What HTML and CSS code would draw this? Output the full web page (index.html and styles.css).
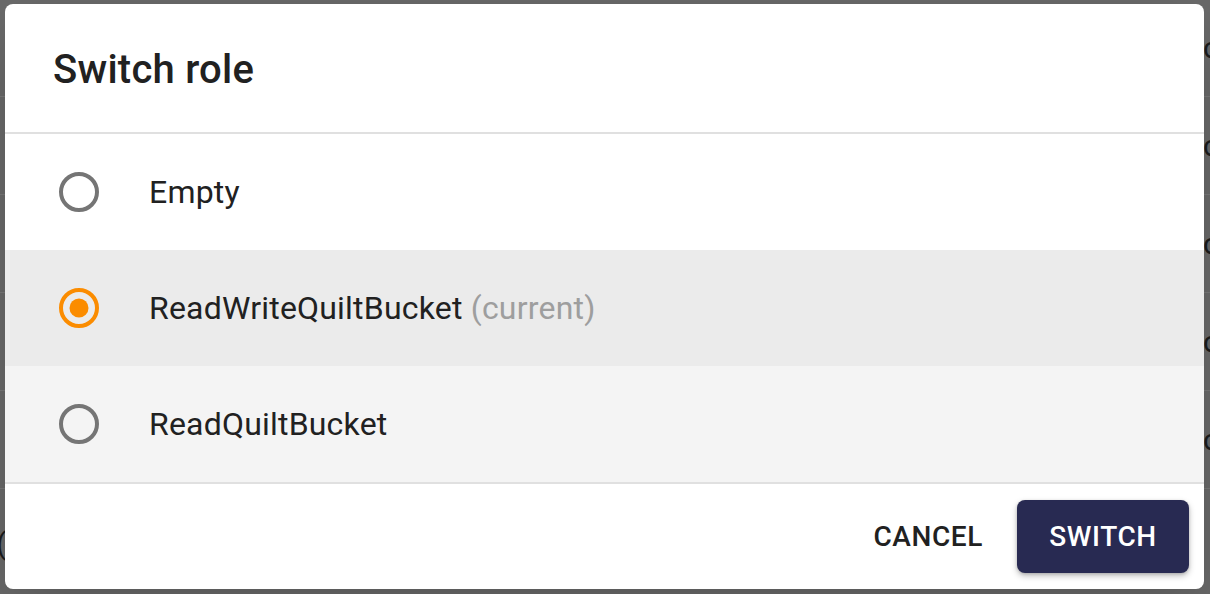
FILE: index.html
```html
<!DOCTYPE html>
<html>
<head>
<meta charset="utf-8">
<link rel="stylesheet" href="styles.css">
</head>
<body>
<div class="page">
  <div class="bg-row"><span class="bg-text">co</span></div>
  <div class="bg-row"><span class="bg-text">co</span></div>
  <div class="bg-row"><span class="bg-text">co</span></div>
  <div class="bg-row"><span class="bg-text">co</span></div>
  <div class="bg-row"><span class="bg-text">co</span></div>
  <div class="bg-row bg-row-left"><span class="bg-text-left">(</span></div>
</div>

<div class="dialog" role="dialog">
  <div class="dialog-title">Switch role</div>
  <div class="dialog-content">
    <div class="option">
      <svg class="radio" viewBox="0 0 48 48" width="48" height="48"><circle cx="24" cy="24" r="18" fill="none" stroke="#757575" stroke-width="4"/></svg>
      <span class="label">Empty</span>
    </div>
    <div class="option option-selected">
      <svg class="radio" viewBox="0 0 48 48" width="48" height="48"><circle cx="24" cy="24" r="18" fill="none" stroke="#fb8c00" stroke-width="4"/><circle cx="24" cy="24" r="9.5" fill="#fb8c00"/></svg>
      <span class="label">ReadWriteQuiltBucket <span class="muted">(current)</span></span>
    </div>
    <div class="option option-hover">
      <svg class="radio" viewBox="0 0 48 48" width="48" height="48"><circle cx="24" cy="24" r="18" fill="none" stroke="#757575" stroke-width="4"/></svg>
      <span class="label">ReadQuiltBucket</span>
    </div>
  </div>
  <div class="dialog-actions">
    <button class="btn btn-text">CANCEL</button>
    <button class="btn btn-primary">SWITCH</button>
  </div>
</div>
</body>
</html>
```

FILE: styles.css
```css
html, body {
  margin: 0;
  padding: 0;
  width: 1210px;
  height: 594px;
  overflow: hidden;
  background: #6b6b6b;
  font-family: Roboto, "Liberation Sans", sans-serif;
}

.page {
  display: flex;
  flex-direction: column;
  margin-top: -1px;
}

.bg-row {
  height: 97px;
  border-bottom: 1px solid #7a7a7a;
  display: flex;
  align-items: center;
  padding-left: 1203px;
  font-size: 30px;
  color: #1c1c1c;
  white-space: nowrap;
}

.bg-row-left {
  padding-left: 0;
  border-bottom: none;
  align-items: center;
  padding-top: 6px;
}

.bg-text-left {
  margin-left: -4px;
}

.dialog {
  position: absolute;
  left: 5px;
  top: 4px;
  width: 1199px;
  height: 585px;
  background: #ffffff;
  border-radius: 8px;
  display: flex;
  flex-direction: column;
  overflow: hidden;
  box-shadow: 0 22px 70px rgba(0,0,0,0.2);
}

.dialog-title {
  box-sizing: border-box;
  height: 130px;
  padding-left: 48px;
  padding-top: 42px;
  font-size: 40px;
  font-weight: 500;
  line-height: 48px;
  color: #212121;
  letter-spacing: 0.25px;
  border-bottom: 2px solid #e0e0e0;
}

.dialog-content {
  display: flex;
  flex-direction: column;
  border-bottom: 2px solid #e0e0e0;
}

.option {
  height: 116px;
  display: flex;
  align-items: center;
  padding-left: 50px;
  box-sizing: border-box;
}

.option-selected {
  background: #ebebeb;
}

.option-hover {
  background: #f4f4f4;
}

.radio {
  flex: none;
  display: block;
}

.label {
  margin-left: 46px;
  font-size: 32px;
  line-height: 40px;
  color: #212121;
  letter-spacing: 0.2px;
}

.muted {
  color: #9e9e9e;
}

.dialog-actions {
  flex: 1;
  display: flex;
  justify-content: flex-end;
  align-items: center;
  gap: 18px;
  padding: 16px 15px 16px 16px;
}

.btn {
  font-family: Roboto, "Liberation Sans", sans-serif;
  font-size: 28px;
  font-weight: 500;
  letter-spacing: 0.6px;
  border: none;
  cursor: pointer;
  height: 73px;
  border-radius: 8px;
}

.btn-text {
  background: transparent;
  color: #212121;
  padding: 0 16px;
}

.btn-primary {
  background: #282a52;
  color: #ffffff;
  padding: 0;
  width: 172px;
  box-shadow: 0 3px 6px rgba(0,0,0,0.25), 0 1px 3px rgba(0,0,0,0.15);
}
```
